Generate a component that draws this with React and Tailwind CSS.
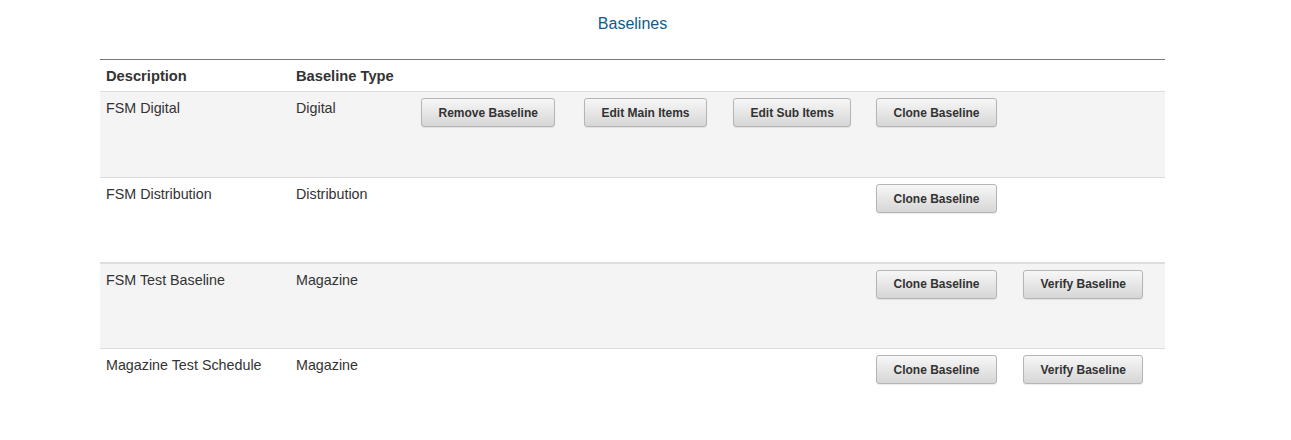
import React from 'react';

const rows = [
  { name: 'FSM Digital', type: 'Digital', actions: ['Remove Baseline', 'Edit Main Items', 'Edit Sub Items', 'Clone Baseline', null], shaded: true, h: 'h-[86px]' },
  { name: 'FSM Distribution', type: 'Distribution', actions: [null, null, null, 'Clone Baseline', null], shaded: false, h: 'h-[85px]' },
  { name: 'FSM Test Baseline', type: 'Magazine', actions: [null, null, null, 'Clone Baseline', 'Verify Baseline'], shaded: true, thick: true, h: 'h-[86px]' },
  { name: 'Magazine Test Schedule', type: 'Magazine', actions: [null, null, null, 'Clone Baseline', 'Verify Baseline'], shaded: false, h: 'h-[85px]' },
];

function Btn({ label }) {
  return (
    <button className="h-[29px] px-[16.5px] rounded-[3px] border border-[#b5b5b5] bg-gradient-to-b from-[#f7f7f7] to-[#d6d6d6] text-[12px] font-bold text-[#333] shadow-[0_1px_1px_rgba(0,0,0,0.08)] whitespace-nowrap">
      {label}
    </button>
  );
}

export default function App() {
  return (
    <div className="w-[1291px] h-[440px] bg-white text-[#333]" style={{ fontFamily: '"Liberation Sans", Arial, sans-serif' }}>
      <div className="w-[1065px] ml-[100px]">
        <h1 className="pt-[12px] h-[59px] text-center text-[16px] text-[#0f5b87]">Baselines</h1>
        <table className="w-full border-collapse table-fixed">
          <colgroup>
            <col className="w-[190px]" />
            <col className="w-[125px]" />
            <col className="w-[163px]" />
            <col className="w-[149px]" />
            <col className="w-[143px]" />
            <col className="w-[147px]" />
            <col className="w-[148px]" />
          </colgroup>
          <thead>
            <tr className="h-[32px] border-t border-t-[#777] border-b border-b-[#ddd]">
              <th className="text-left align-top pl-[6px] pt-[6px] text-[14.7px] font-bold leading-[20px]">Description</th>
              <th className="text-left align-top pl-[6px] pt-[6px] text-[14.7px] font-bold leading-[20px]">Baseline Type</th>
              <th></th><th></th><th></th><th></th><th></th>
            </tr>
          </thead>
          <tbody>
            {rows.map((r, i) => (
              <tr
                key={i}
                className={`${r.h} ${r.thick ? 'border-t-2' : 'border-t'} border-t-[#ddd] ${r.shaded ? 'bg-[#f4f4f4]' : 'bg-white'}`}
              >
                <td className="align-top pl-[6px] pt-[6px] text-[14.3px] leading-[20px]">{r.name}</td>
                <td className="align-top pl-[6px] pt-[6px] text-[14.3px] leading-[20px]">{r.type}</td>
                {r.actions.map((a, j) => (
                  <td key={j} className="align-top pl-[6px] pt-[6px]">
                    {a && <Btn label={a} />}
                  </td>
                ))}
              </tr>
            ))}
          </tbody>
        </table>
      </div>
    </div>
  );
}
